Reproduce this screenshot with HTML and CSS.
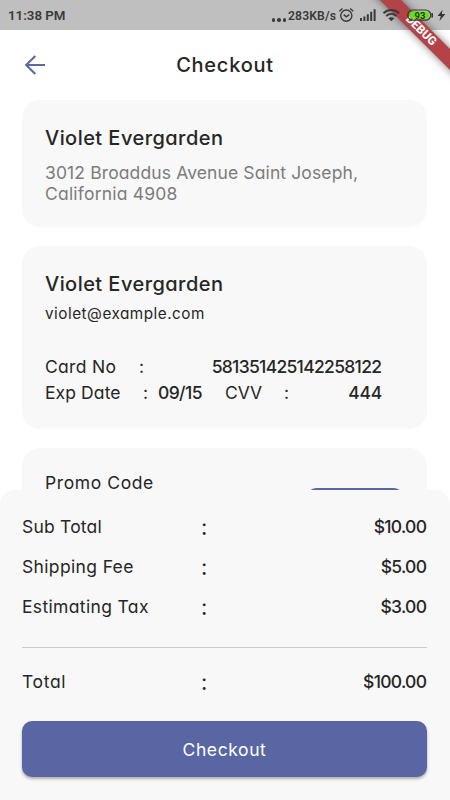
FILE: index.html
```html
<!DOCTYPE html>
<html lang="en">
<head>
<meta charset="utf-8">
<meta name="viewport" content="width=device-width, initial-scale=1">
<title>Checkout</title>
<link rel="stylesheet" href="styles.css">
</head>
<body>
<div class="screen">
  <div class="status">
    <span class="clock">11:38 PM</span>
    <span class="speed"><i class="dots"><b></b><b></b><b></b></i>283KB/s</span>
    <svg class="status-icons" width="112" height="30" viewBox="338 0 112 30" fill="none" stroke="#3a3a3a">
      <circle cx="346.3" cy="15.6" r="5.600" stroke-width="1.4"/>
      <path d="M339.300 11.300l3.200-2.800M353.300 11.300l-3.200-2.800M343.700 14.600l2.600 2.200 3-2.200" stroke-width="1.4"/>
      <path d="M361 18v3M364.4 16.5V21M367.8 14.2V21M371.2 11.8V21M374.6 9.2V21" stroke-width="2"/>
      <path d="M383.5 13.2c4.4-4.2 11.200-4.200 15.600 0M386.200 16c3-2.700 7.200-2.700 10.200 0" stroke-width="2"/>
      <path d="M388.300 18.300c1.800-1.500 4.200-1.500 6 0l-3 3z" fill="#3a3a3a" stroke="none"/>
      <rect x="407.700" y="10" width="23" height="10.200" rx="5" stroke-width="1.200"/>
      <rect x="409.300" y="11.500" width="19.800" height="7.200" rx="3.500" fill="#66e317" stroke="none"/>
      <path d="M432.200 13v4.500" stroke-width="1.600"/>
      <text x="420" y="18.600" text-anchor="middle" class="battery">93</text>
      <path d="M442.600 9.700l-5 6.300h3.200l-1.400 5 6-7h-3.600z" fill="#333" stroke="none"/>
    </svg>
  </div>
  <header class="topbar">
    <svg class="back" width="22" height="22" viewBox="0 0 22 22" fill="none" stroke="#5b68a4" stroke-width="2.100"><path d="M21 11H2.500M11.300 1.900L2.200 11l9.100 9.100"/></svg>
    <h1>Checkout</h1>
  </header>
  <main class="cards">
    <section class="card address-card">
      <h2>Violet Evergarden</h2>
      <p class="address"><span class="line-one">3012 Broaddus Avenue Saint Joseph,</span><br><span class="line-two">California 4908</span></p>
    </section>
    <section class="card payment-card">
      <h2>Violet Evergarden</h2>
      <p class="email">violet@example.com</p>
      <div class="pay-row">
        <span class="card-label">Card No</span><span class="colon-one">:</span>
        <span class="card-number">581351425142258122</span>
      </div>
      <div class="pay-row">
        <span class="exp-label">Exp Date</span><span class="colon-two">:</span><span class="exp">09/15</span>
        <span class="cvv-label">CVV</span><span>:</span><span class="cvv">444</span>
      </div>
    </section>
    <section class="card promo-card">
      <span class="promo-label">Promo Code</span>
      <div class="promo-button"></div>
    </section>
  </main>
  <section class="sheet">
    <div class="sum-row"><span class="sub">Sub Total</span><span class="colon">:</span><strong>$10.00</strong></div>
    <div class="sum-row"><span class="ship">Shipping Fee</span><span class="colon">:</span><strong>$5.00</strong></div>
    <div class="sum-row"><span class="tax">Estimating Tax</span><span class="colon">:</span><strong>$3.00</strong></div>
    <hr>
    <div class="sum-row total-row"><span class="total">Total</span><span class="colon">:</span><strong>$100.00</strong></div>
    <button class="pay">Checkout</button>
  </section>
  <div class="debug"><span>DEBUG</span></div>
</div>
</body>
</html>
```

FILE: styles.css
```css
* { box-sizing: border-box; }
body { margin: 0; background: #fff; color: #262626; font-family: Inter, sans-serif; font-feature-settings: "cv11"; font-size: 17.5px; }
h1, h2, p { margin: 0; font-weight: 500; }
span, strong, h1, h2 { white-space: nowrap; }
.screen { position: relative; width: 450px; height: 800px; overflow: hidden; display: flex; flex-direction: column; }
.status { height: 30px; flex: none; background: #bfbfbf; display: flex; align-items: center; padding-left: 8px; color: #3a3a3a; font: 600 13.3px/30px Roboto, sans-serif; }
.clock { padding-top: 1px; }
.status-icons { position: relative; z-index: 3; }
.speed { margin-left: auto; display: flex; font-size: 12.2px; letter-spacing: .1px; padding-right: 2px; padding-top: 1px; }
.dots { display: flex; gap: 2px; align-items: flex-end; padding: 0 2px 9px 0; }
.dots b { width: 3.500px; height: 3.500px; border-radius: 50%; background: #3a3a3a; }
.battery { font: 700 9.500px Roboto, sans-serif; fill: #263d18; stroke: none; }
.topbar { height: 70px; flex: none; display: grid; grid-template-columns: 46px 1fr 46px; align-items: center; }
.back { margin-left: 24px; }
h1 { text-align: center; font-size: 20px; line-height: 30px; letter-spacing: .75px; }
.cards { flex: 1; min-height: 0; padding: 0 23px 0 22px; display: flex; flex-direction: column; gap: 19px; }
.card { flex: none; background: #f8f8f8; border-radius: 18px; padding: 23px 22px 23px 23px; }
h2 { font-size: 20px; line-height: 30px; letter-spacing: .45px; }
.address-card { height: 127px; }
.address { color: #7c7c7c; font-weight: 400; line-height: 21px; margin-top: 9px; }
.line-one { letter-spacing: .12px; }
.line-two { letter-spacing: .2px; }
.payment-card { height: 182.500px; }
.email { font-size: 15.3px; line-height: 24px; font-weight: 400; letter-spacing: .5px; margin: 3px 0 28px; }
.pay-row { display: flex; height: 26px; line-height: 26px; width: 337px; }
.card-label { width: 94px; letter-spacing: .3px; }
.card-number { margin-left: auto; font-weight: 500; letter-spacing: -.7px; padding-right: .7px; }
.exp-label { width: 98px; letter-spacing: .1px; }
.colon-two { width: 15px; }
.exp { width: 67px; font-weight: 500; letter-spacing: -.6px; }
.cvv-label { width: 59px; }
.cvv { margin-left: auto; font-weight: 500; letter-spacing: -.2px; }
.promo-card { height: 120px; padding-top: 22px; }
.promo-label { display: block; line-height: 26px; height: 18px; letter-spacing: .6px; }
.promo-button { width: 98px; height: 45px; margin-left: 261px; border-radius: 11px; background: #5966a3; }
.sheet { position: relative; z-index: 1; height: 310px; flex: none; background: #f8f8f8; border-radius: 15px 15px 0 0; padding: 17px 23px 0 22px; }
.sum-row { height: 40px; line-height: 40px; display: grid; grid-template-columns: 179px 1fr auto; }
.sub { letter-spacing: .2px; }
.ship, .tax { letter-spacing: .35px; }
.total { letter-spacing: .65px; }
.colon { font-size: 22px; }
.sum-row strong { font-weight: 500; letter-spacing: -.7px; padding-right: .7px; }
hr { margin: 20px 0 14px; border: 0; border-top: 1px solid #cbcbcb; }
.pay { display: block; width: 100%; height: 56px; margin-top: 19px; padding: 0; border: 0; border-radius: 10px; background: #5966a3; color: #fff; font: inherit; font-feature-settings: "cv11"; font-size: 17.500px; letter-spacing: .6px; box-shadow: 0 2px 3px rgba(0,0,0,.3); }
.debug { position: absolute; z-index: 2; top: 23px; right: -50.5px; width: 160px; height: 15px; transform: rotate(45deg); background: #b24347; box-shadow: 0 0 8px rgba(0,0,0,.5); color: #fff; text-align: center; font: 800 11.8px/15px Roboto, sans-serif; }
```
